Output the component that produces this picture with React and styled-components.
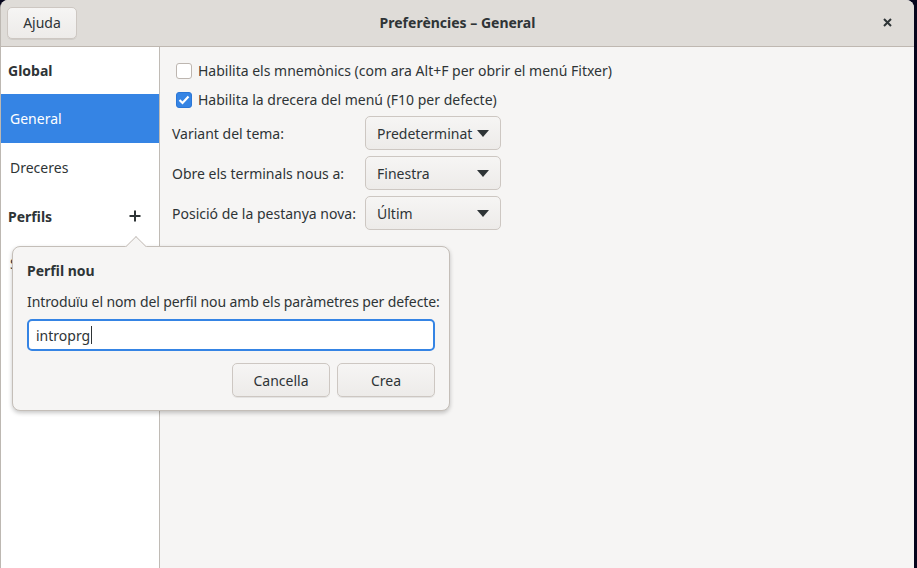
import styled, { createGlobalStyle } from 'styled-components';

const GlobalStyle = createGlobalStyle`
  html, body {
    margin: 0;
    padding: 0;
    background: #05051c;
    height: 100%;
    overflow: hidden;
  }
  body {
    font-family: 'Noto Sans', 'Open Sans', sans-serif;
    font-size: 14px;
    color: #2e3436;
  }
`;

const Window = styled.div`
  position: relative;
  width: 913px;
  height: 568px;
  background: #f6f5f4;
  border-left: 1px solid #bdb8b2;
  border-radius: 8px 8px 0 0;
  overflow: hidden;
  display: flex;
  flex-direction: column;
`;

const HeaderBar = styled.div`
  height: 47px;
  flex: none;
  box-sizing: border-box;
  background: #dfdcd8;
  border-bottom: 1px solid #bfb8b1;
  display: grid;
  grid-template-columns: 1fr auto 1fr;
  align-items: center;
  padding: 0 6px 1px;
`;

const Button = styled.button`
  font-family: inherit;
  font-size: 14px;
  color: #2e3436;
  height: ${(p) => p.$h || 32}px;
  width: ${(p) => (p.$w ? `${p.$w}px` : 'auto')};
  padding: 0 14px;
  border: 1px solid #cdc7c2;
  border-radius: 5px;
  background: linear-gradient(#f6f5f4, #edebe9);
  box-shadow: 0 1px 0 rgba(0, 0, 0, 0.07);
  box-sizing: border-box;
`;

const Title = styled.div`
  font-weight: bold;
  font-size: 14px;
  color: #2e3436;
`;

const CloseBtn = styled.div`
  justify-self: end;
  width: 30px;
  height: 30px;
  display: flex;
  align-items: center;
  justify-content: center;
  margin-right: 6px;
`;

const Body = styled.div`
  flex: 1;
  display: flex;
`;

const Sidebar = styled.div`
  width: 158px;
  flex: none;
  background: #ffffff;
  border-right: 1px solid #c0bbb5;
  display: flex;
  flex-direction: column;
`;

const SideRow = styled.div`
  height: ${(p) => p.$h || 48}px;
  display: flex;
  align-items: center;
  justify-content: space-between;
  padding: 0 18px 0 ${(p) => (p.$head ? 7 : 9)}px;
  font-weight: ${(p) => (p.$head ? 'bold' : 'normal')};
  background: ${(p) => (p.$active ? '#3584e4' : 'transparent')};
  color: ${(p) => (p.$active ? '#ffffff' : '#2e3436')};
`;

const Content = styled.div`
  flex: 1;
  padding: 9px 0 0 12px;
  display: flex;
  flex-direction: column;
`;

const CheckRow = styled.label`
  display: flex;
  align-items: center;
  gap: 6px;
  height: 29px;
  padding-left: 4px;
`;

const Check = styled.span`
  width: 14px;
  height: 14px;
  border-radius: 3px;
  border: 1px solid ${(p) => (p.$on ? '#2a76d6' : '#bdb6b0')};
  background: ${(p) => (p.$on ? '#3584e4' : '#ffffff')};
  display: flex;
  align-items: center;
  justify-content: center;
`;

const FormGrid = styled.div`
  display: grid;
  grid-template-columns: 193px 136px;
  row-gap: 6px;
  align-items: center;
  margin-top: 2px;
`;

const Combo = styled.div`
  height: 34px;
  box-sizing: border-box;
  border: 1px solid #cdc7c2;
  border-radius: 5px;
  background: linear-gradient(#f6f5f4, #edebe9);
  display: flex;
  align-items: center;
  justify-content: space-between;
  padding: 0 11px 0 11px;
`;

const Popover = styled.div`
  position: absolute;
  left: 11px;
  top: 246px;
  width: 438px;
  height: 165px;
  box-sizing: border-box;
  background: #f6f5f4;
  border: 1px solid #c4beb8;
  border-radius: 8px;
  box-shadow: 0 2px 4px rgba(0, 0, 0, 0.22);
  padding: 11px 14px 0 14px;
  display: flex;
  flex-direction: column;
`;

const Arrow = styled.div`
  position: absolute;
  left: 115px;
  top: -8px;
  width: 15px;
  height: 15px;
  background: #f6f5f4;
  border-left: 1px solid #c4beb8;
  border-top: 1px solid #c4beb8;
  transform: rotate(45deg);
  clip-path: polygon(0 0, 100% 0, 0 100%);
`;

const PopTitle = styled.div`
  font-weight: bold;
  height: 24px;
  display: flex;
  align-items: center;
`;

const PopLabel = styled.div`
  margin-top: 7px;
  height: 24px;
  display: flex;
  align-items: center;
  white-space: nowrap;
  letter-spacing: -0.1px;
`;

const Entry = styled.div`
  margin-top: 6px;
  height: 32px;
  box-sizing: border-box;
  border: 2px solid #3584e4;
  border-radius: 5px;
  background: #ffffff;
  display: flex;
  align-items: center;
  padding-left: 7px;
`;

const Caret = styled.span`
  display: inline-block;
  width: 1px;
  height: 18px;
  background: #2e3436;
  margin-left: 1px;
`;

const Actions = styled.div`
  margin-top: 12px;
  display: flex;
  justify-content: flex-end;
  gap: 7px;
`;

const Triangle = () => (
  <svg width="12" height="7" viewBox="0 0 12 7">
    <path d="M0 0 L12 0 L6 7 Z" fill="#2e3436" />
  </svg>
);

export default function App() {
  return (
    <>
      <GlobalStyle />
      <Window>
        <HeaderBar>
          <div>
            <Button $w={70}>Ajuda</Button>
          </div>
          <Title>Preferències – General</Title>
          <CloseBtn>
            <svg width="9" height="9" viewBox="0 0 9 9">
              <path d="M1 1 L8 8 M8 1 L1 8" stroke="#2e3436" strokeWidth="2" />
            </svg>
          </CloseBtn>
        </HeaderBar>
        <Body>
          <Sidebar>
            <SideRow $head $h={47}>Global</SideRow>
            <SideRow $active $h={49}>General</SideRow>
            <SideRow $h={49}>Dreceres</SideRow>
            <SideRow $head>
              Perfils
              <svg width="12" height="12" viewBox="0 0 12 12">
                <path d="M6 0.5 V11.5 M0.5 6 H11.5" stroke="#2e3436" strokeWidth="2" />
              </svg>
            </SideRow>
            <SideRow $h={47}>Sense nom</SideRow>
          </Sidebar>
          <Content>
            <CheckRow>
              <Check />
              Habilita els mnemònics (com ara Alt+F per obrir el menú Fitxer)
            </CheckRow>
            <CheckRow>
              <Check $on>
                <svg width="12" height="10" viewBox="0 0 12 10">
                  <path d="M1.5 5 L4.5 8 L10.5 1.5" stroke="#fff" strokeWidth="2.2" fill="none" />
                </svg>
              </Check>
              Habilita la drecera del menú (F10 per defecte)
            </CheckRow>
            <FormGrid>
              <span>Variant del tema:</span>
              <Combo>
                Predeterminat
                <Triangle />
              </Combo>
              <span>Obre els terminals nous a:</span>
              <Combo>
                Finestra
                <Triangle />
              </Combo>
              <span>Posició de la pestanya nova:</span>
              <Combo>
                Últim
                <Triangle />
              </Combo>
            </FormGrid>
          </Content>
        </Body>
        <Popover>
          <Arrow />
          <PopTitle>Perfil nou</PopTitle>
          <PopLabel>Introduïu el nom del perfil nou amb els paràmetres per defecte:</PopLabel>
          <Entry>
            introprg
            <Caret />
          </Entry>
          <Actions>
            <Button $w={98} $h={34}>Cancella</Button>
            <Button $w={98} $h={34}>Crea</Button>
          </Actions>
        </Popover>
      </Window>
    </>
  );
}
